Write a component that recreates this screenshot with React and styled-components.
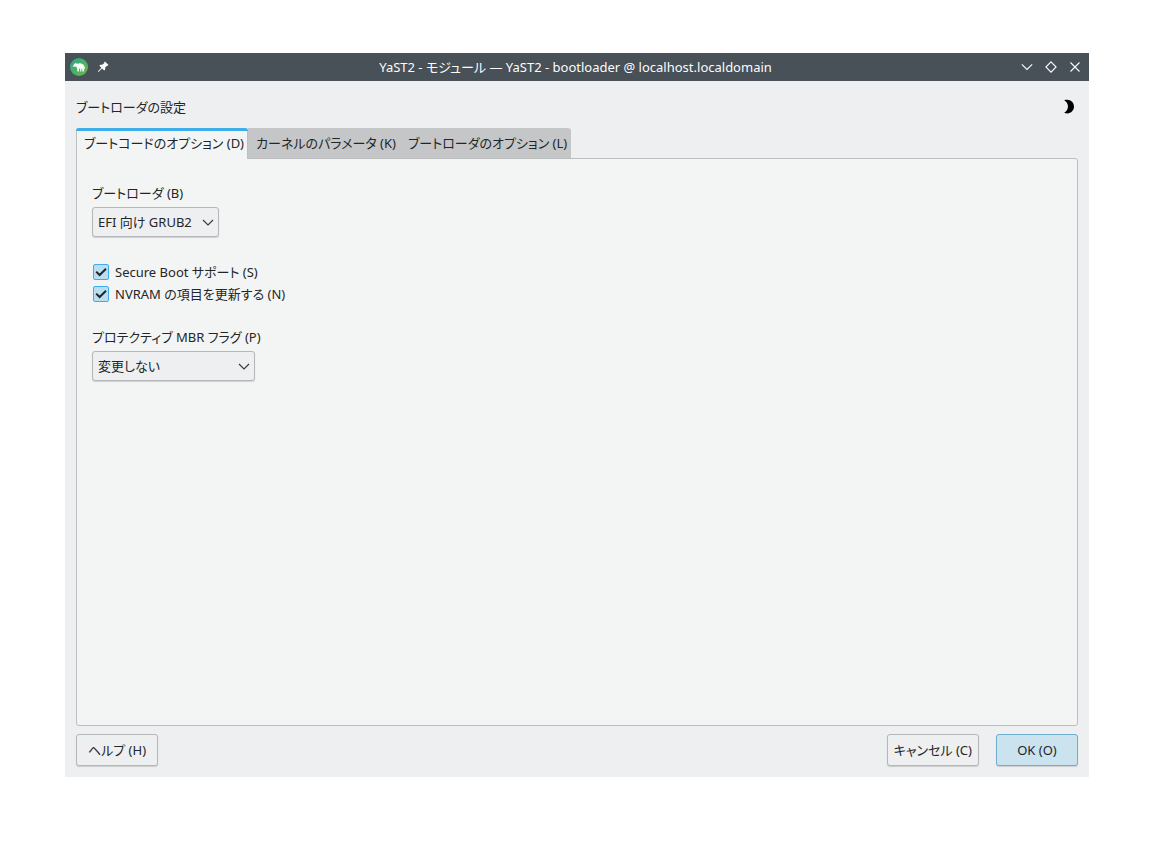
import React, { useState } from 'react';
import styled, { createGlobalStyle, css } from 'styled-components';

const GlobalStyle = createGlobalStyle`
    *, *::before, *::after {
        box-sizing: border-box;
    }
    body {
        margin: 0;
        background: #ffffff;
    }
    body, button, select, input {
        font-family: 'Noto Sans', 'Noto Sans CJK JP', sans-serif;
        font-size: 13px;
        line-height: 20px;
        font-feature-settings: 'palt', 'kern';
        color: #232629;
    }
`;

const Desktop = styled.div`
    display: flex;
    min-height: 100vh;
    padding: 53px 65px 77px;
`;

const Window = styled.main`
    flex: 1;
    min-width: 0;
    display: flex;
    flex-direction: column;
    background: #eeeff1;
`;

const TitleBar = styled.header`
    display: grid;
    grid-template-columns: 1fr auto 1fr;
    align-items: center;
    height: 28px;
    padding: 0 8px 0 5px;
    background: #485058;
    color: #fcfcfc;
`;

const TitleText = styled.h1`
    margin: 0;
    font-size: 13px;
    font-weight: 400;
    white-space: nowrap;
`;

const TitleGroup = styled.div`
    display: flex;
    align-items: center;
    gap: ${ props => props.$gap };
    justify-content: ${ props => props.$end ? 'flex-end' : 'flex-start' };
`;

const IconButton = styled.button`
    display: flex;
    padding: 0;
    border: 0;
    background: none;
    color: inherit;
`;

const Body = styled.div`
    flex: 1;
    display: flex;
    flex-direction: column;
    padding: 16px 11px 11px;
`;

const Heading = styled.div`
    display: flex;
    align-items: center;
    justify-content: space-between;
    height: 20px;
    margin-bottom: 11px;
    padding-right: 1px;
`;

const HeadingText = styled.h2`
    margin: 0;
    font-size: 13px;
    font-weight: 400;
`;

const TabList = styled.div`
    display: flex;
    height: 30px;
`;

const Tab = styled.button`
    position: relative;
    padding: 0 4px 0 8px;
    border: 0;
    background: #c5c6c7;
    white-space: nowrap;

    &:last-child {
        border-top-right-radius: 3px;
    }

    ${ props => props.$active && css`
        height: 31px;
        padding: 0 3px 1px 7px;
        z-index: 1;
        border: 1px solid #bcbebf;
        border-width: 0 1px;
        border-radius: 3px 3px 0 0;
        background: #f3f5f4;

        &::before {
            content: '';
            position: absolute;
            top: 0;
            left: -1px;
            right: -1px;
            height: 3px;
            border-radius: 3px 3px 0 0;
            background: #3daee9;
        }
    ` }
`;

const Panel = styled.section`
    flex: 1;
    padding: 24px 15px;
    border: 1px solid #bcbebf;
    border-radius: 0 3px 3px 3px;
    background: #f3f5f4;
`;

const Field = styled.div`
    display: flex;
    flex-direction: column;
    align-items: flex-start;
    gap: 4px;
`;

const SelectBox = styled.div`
    position: relative;
    width: ${ props => props.$width };
`;

const Select = styled.select`
    appearance: none;
    display: block;
    width: 100%;
    height: 30px;
    padding: 0 24px 0 5px;
    border: 1px solid #b4b6b8;
    border-radius: 3px;
    background: #eeeff1;
    box-shadow: 0 1px 1px rgba(0, 0, 0, 0.15);
`;

const SelectArrow = styled.svg`
    position: absolute;
    top: 12px;
    right: 5px;
    pointer-events: none;
`;

const CheckList = styled.div`
    display: flex;
    flex-direction: column;
    align-items: flex-start;
    gap: 2px;
    margin: 25px 0 23px;
    padding-left: 1px;
`;

const CheckLabel = styled.label`
    display: flex;
    align-items: center;
    gap: 6px;
`;

const CheckBox = styled.span`
    position: relative;
    display: flex;
    width: 16px;
    height: 16px;
`;

const CheckInput = styled.input`
    appearance: none;
    width: 16px;
    height: 16px;
    margin: 0;
    border: 1px solid #b4b6b8;
    border-radius: 2px;
    background: #f3f5f4;

    &:checked {
        border-color: #3daee9;
        background: #b9def1;
    }
    &:not(:checked) + svg {
        display: none;
    }
`;

const CheckMark = styled.svg`
    position: absolute;
    inset: 0;
    pointer-events: none;
`;

const Footer = styled.footer`
    display: flex;
    gap: 17px;
    margin-top: 8px;
`;

const PushButton = styled.button`
    height: 32px;
    min-width: 82px;
    padding: 0 6px;
    border: 1px solid ${ props => props.$primary ? '#6fadd1' : '#b4b6b8' };
    border-radius: 3px;
    background: ${ props => props.$primary ? '#cbe3ef' : '#eeeff1' };
    box-shadow: 0 1px 1px rgba(0, 0, 0, 0.15);
    white-space: nowrap;
    margin-right: ${ props => props.$pushRest ? 'auto' : '0' };
`;

const AppLogo = () => (
    <svg width="18" height="18" viewBox="0 0 18 18" aria-hidden="true">
        <defs>
            <linearGradient id="logo" x1="0" y1="0" x2="1" y2="1">
                <stop offset="0" stopColor="#2fa58c"/>
                <stop offset="1" stopColor="#69b843"/>
            </linearGradient>
        </defs>
        <circle cx="9" cy="9" r="9" fill="url(#logo)"/>
        <path
            d="M2.6 8.6L4.2 6.2L5.6 4.8L6.6 5.8L9 5.4C11.5 5.2 13.6 6.2 14.3 8L15.2 11L14.2 10.4L14 13.4H12.4L12.2 11L11.4 10.4V13.4H10.2L10 10.6L9 10.8V13.4H7.4L7 10L6 8.4L4.4 8.8Z"
            fill="#f4fbf4"
        />
    </svg>
);

const PinIcon = () => (
    <svg width="12" height="12" viewBox="0 0 12 12" aria-hidden="true">
        <path d="M8 0.5L11.5 4L10.7 4.8L10 4.7L8.2 6.6L8.2 8.6L7.2 9.5L5.1 7.4L1.4 11L0.8 10.4L4.4 6.7L2.4 4.7L3.3 3.8L5.3 3.8L7.3 2L7.2 1.3Z" fill="#fcfcfc"/>
    </svg>
);

const windowIcons = [
    { name: 'Minimize', path: 'M0.8 3.3L6 8.5L11.2 3.3' },
    { name: 'Maximize', path: 'M6 0.9L11.1 6L6 11.1L0.9 6Z' },
    { name: 'Close', path: 'M1.5 1.5L10.5 10.5M10.5 1.5L1.5 10.5' }
];

const tabs = [
    'ブートコードのオプション (D)',
    'カーネルのパラメータ (K)',
    'ブートローダのオプション (L)'
];

const SelectField = ({ id, label, width, options }) => (
    <Field>
        <label htmlFor={id}>{label}</label>
        <SelectBox $width={width}>
            <Select id={id}>
                {options.map(item => <option key={item}>{item}</option>)}
            </Select>
            <SelectArrow width="12" height="8" viewBox="0 0 12 8" aria-hidden="true">
                <path d="M1 1L6 6L11 1" fill="none" stroke="#31363b" strokeWidth="1.1"/>
            </SelectArrow>
        </SelectBox>
    </Field>
);

const CheckField = ({ label }) => (
    <CheckLabel>
        <CheckBox>
            <CheckInput type="checkbox" defaultChecked/>
            <CheckMark width="16" height="16" viewBox="0 0 16 16" aria-hidden="true">
                <path d="M3.2 7.6L6.6 11L13 4.8" fill="none" stroke="#232629" strokeWidth="2"/>
            </CheckMark>
        </CheckBox>
        {label}
    </CheckLabel>
);

const App = () => {
    const [activeTab, setActiveTab] = useState(0);

    return (
        <Desktop>
            <GlobalStyle/>
            <Window>
                <TitleBar>
                    <TitleGroup $gap="9px">
                        <AppLogo/>
                        <IconButton type="button" aria-label="Pin">
                            <PinIcon/>
                        </IconButton>
                    </TitleGroup>
                    <TitleText>YaST2 - モジュール — YaST2 - bootloader @ localhost.localdomain</TitleText>
                    <TitleGroup $gap="12px" $end>
                        {windowIcons.map(icon => (
                            <IconButton type="button" aria-label={icon.name} key={icon.name}>
                                <svg width="12" height="12" viewBox="0 0 12 12" aria-hidden="true">
                                    <path d={icon.path} fill="none" stroke="#fcfcfc" strokeWidth="1.1"/>
                                </svg>
                            </IconButton>
                        ))}
                    </TitleGroup>
                </TitleBar>
                <Body>
                    <Heading>
                        <HeadingText>ブートローダの設定</HeadingText>
                        <IconButton type="button" aria-label="Dark mode">
                            <svg width="16" height="16" viewBox="0 0 16 16" aria-hidden="true">
                                <path d="M3.2 1.2C9 -0.4 13 3.1 13 7.6C13 12.4 8.6 15.8 3.2 13.8C8.2 11.3 8.2 3.9 3.2 1.2Z" fill="#000000"/>
                            </svg>
                        </IconButton>
                    </Heading>
                    <TabList role="tablist">
                        {tabs.map((item, idx) => (
                            <Tab
                                type="button"
                                role="tab"
                                aria-selected={idx === activeTab}
                                $active={idx === activeTab}
                                onClick={() => setActiveTab(idx)}
                                key={item}
                            >
                                {item}
                            </Tab>
                        ))}
                    </TabList>
                    <Panel role="tabpanel">
                        <SelectField
                            id="bootloader"
                            label="ブートローダ (B)"
                            width="127px"
                            options={['EFI 向け GRUB2']}
                        />
                        <CheckList>
                            <CheckField label="Secure Boot サポート (S)"/>
                            <CheckField label="NVRAM の項目を更新する (N)"/>
                        </CheckList>
                        <SelectField
                            id="mbrFlag"
                            label="プロテクティブ MBR フラグ (P)"
                            width="163px"
                            options={['変更しない']}
                        />
                    </Panel>
                    <Footer>
                        <PushButton type="button" $pushRest>ヘルプ (H)</PushButton>
                        <PushButton type="button">キャンセル (C)</PushButton>
                        <PushButton type="button" $primary>OK (O)</PushButton>
                    </Footer>
                </Body>
            </Window>
        </Desktop>
    );
};

export default App;
